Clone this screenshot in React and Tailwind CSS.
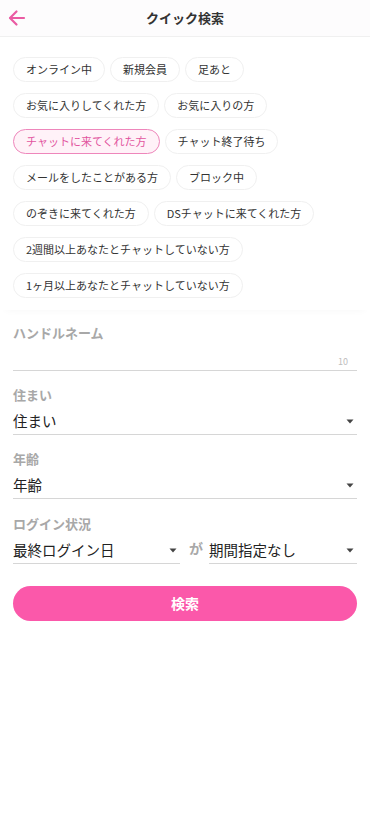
const chipRows = [
  ['オンライン中', '新規会員', '足あと'],
  ['お気に入りしてくれた方', 'お気に入りの方'],
  ['チャットに来てくれた方', 'チャット終了待ち'],
  ['メールをしたことがある方', 'ブロック中'],
  ['のぞきに来てくれた方', 'DSチャットに来てくれた方'],
  ['2週間以上あなたとチャットしていない方'],
  ['1ヶ月以上あなたとチャットしていない方'],
];

const Caret = () => (
  <svg width="8" height="5" viewBox="0 0 8 5" className="shrink-0">
    <path d="M0.5 0.5h7L4 4.5z" fill="#444" />
  </svg>
);

const Select = ({ value, className = '' }) => (
  <div className={`flex items-center justify-between border-b border-[#d6d6d6] pb-[3px] pr-[3px] ${className}`}>
    <span className="text-[14.5px] leading-[20px] text-[#222]">{value}</span>
    <Caret />
  </div>
);

const Label = ({ children }) => (
  <div className="text-[13px] font-bold leading-[18px] text-[#a8a8a8]">{children}</div>
);

export default function App() {
  return (
    <div className="min-h-[822px] bg-white font-['Noto_Sans_CJK_JP','Noto_Sans',sans-serif] text-[#333]">
      {/* Header */}
      <div className="relative flex h-[37px] items-center justify-center border-b border-[#f0f0f0] bg-[#fdfcfd]">
        <button className="absolute left-[8px] top-[9px]">
          <svg width="18" height="18" viewBox="0 0 18 18" fill="none" stroke="#ea5ba3" strokeWidth="2.2" strokeLinecap="round" strokeLinejoin="round">
            <path d="M16 9H2.5" />
            <path d="M8.5 2.5L2 9l6.5 6.5" />
          </svg>
        </button>
        <h1 className="text-[13px] font-bold text-[#333]">クイック検索</h1>
      </div>

      {/* Quick chips */}
      <div className="flex flex-col gap-[11px] px-[13px] pb-[12px] pt-[20px] shadow-[0_6px_8px_-6px_rgba(0,0,0,0.04)]">
        {chipRows.map((row, i) => (
          <div key={i} className="flex gap-[5px]">
            {row.map((label) => {
              const active = label === 'チャットに来てくれた方';
              return (
                <span
                  key={label}
                  className={
                    active
                      ? 'flex h-[25px] items-center rounded-full border border-[#ee86bb] bg-[#fff2f8] px-[12px] text-[11px] text-[#e2559f]'
                      : 'flex h-[25px] items-center rounded-full border border-[#f0f0f0] bg-white px-[12px] text-[11px] text-[#333]'
                  }
                >
                  {label}
                </span>
              );
            })}
          </div>
        ))}
      </div>

      {/* Form */}
      <div className="px-[13px] pt-[14px]">
        <Label>ハンドルネーム</Label>
        <div className="mt-[8px] flex h-[21px] items-end justify-end border-b border-[#d6d6d6] pb-[4px]">
          <span className="pr-[9px] text-[9px] leading-none text-[#bdbdbd]">10</span>
        </div>

        <div className="mt-[15px]">
          <Label>住まい</Label>
          <Select value="住まい" className="mt-[7px]" />
        </div>

        <div className="mt-[15px]">
          <Label>年齢</Label>
          <Select value="年齢" className="mt-[7px]" />
        </div>

        <div className="mt-[16px]">
          <Label>ログイン状況</Label>
          <div className="mt-[7px] flex items-center">
            <Select value="最終ログイン日" className="w-[167px]" />
            <span className="ml-[9px] mr-[6px] -mt-[7px] text-[14px] font-bold text-[#a8a8a8]">が</span>
            <Select value="期間指定なし" className="flex-1" />
          </div>
        </div>

        <button className="mt-[22px] flex h-[35px] w-full items-center justify-center rounded-full bg-[#fb58aa] text-[14px] font-bold text-white">
          検索
        </button>
      </div>
    </div>
  );
}
